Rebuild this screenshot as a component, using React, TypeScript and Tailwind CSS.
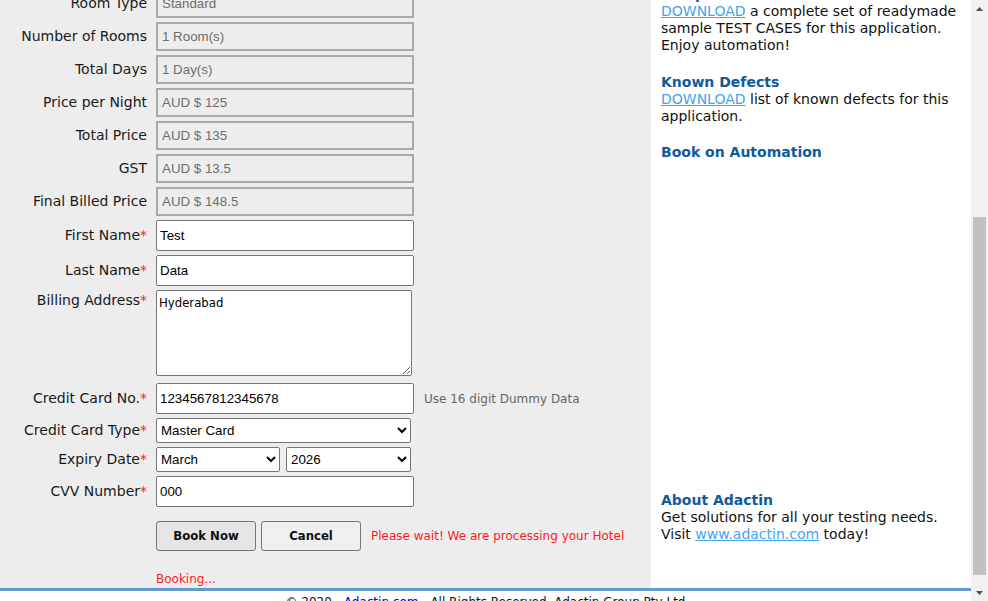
import React from 'react';

const labelCls = "w-[147px] shrink-0 text-right text-[14px] text-[#1a1a1a] font-['DejaVu_Sans',sans-serif]";
const roCls = "h-[29px] w-[258px] border-2 border-[#a9a9a9] bg-[#ededed] px-[4px] text-[13.33px] text-[#6d6d6d] font-['Liberation_Sans',Arial,sans-serif] outline-none";
const inCls = "h-[31px] w-[258px] rounded-[2px] border border-[#767676] bg-white px-[3px] text-[13.33px] text-black font-['Liberation_Sans',Arial,sans-serif] outline-none";
const selCls = "h-[25px] rounded-[2px] border border-[#767676] bg-white pl-0 text-[13.33px] text-black font-['Liberation_Sans',Arial,sans-serif] outline-none";
const btnCls = "h-[30px] w-[100px] rounded-[3px] border border-[#767676] text-[13px] font-bold text-[#111] font-['DejaVu_Sans_Condensed','DejaVu_Sans',sans-serif]";

function Req() {
    return <span className="text-[#ee2a2a]">*</span>;
}

function ReadonlyRow({ label, value }: { label: string; value: string }) {
    return (
        <div className="flex items-center gap-[9px]">
            <label className={labelCls}>{label}</label>
            <input readOnly value={value} className={roCls} />
        </div>
    );
}

function BookingForm() {
    return (
        <div className="-mt-[11px] flex flex-col gap-[4px]">
            <ReadonlyRow label="Room Type" value="Standard" />
            <ReadonlyRow label="Number of Rooms" value="1 Room(s)" />
            <ReadonlyRow label="Total Days" value="1 Day(s)" />
            <ReadonlyRow label="Price per Night" value="AUD $ 125" />
            <ReadonlyRow label="Total Price" value="AUD $ 135" />
            <ReadonlyRow label="GST" value="AUD $ 13.5" />
            <ReadonlyRow label="Final Billed Price" value="AUD $ 148.5" />

            <div className="flex items-center gap-[9px]">
                <label className={labelCls}>First Name<Req /></label>
                <input defaultValue="Test" className={inCls} />
            </div>
            <div className="flex items-center gap-[9px]">
                <label className={labelCls}>Last Name<Req /></label>
                <input defaultValue="Data" className={inCls} />
            </div>
            <div className="flex items-start gap-[9px]">
                <label className={labelCls}>Billing Address<Req /></label>
                <textarea
                    defaultValue="Hyderabad"
                    className="h-[86px] w-[256px] rounded-[2px] border border-[#767676] bg-white px-[2px] py-[2px] text-[13px] text-black font-['DejaVu_Sans_Condensed','DejaVu_Sans',sans-serif] outline-none"
                />
            </div>
            <div className="mt-[3px] flex items-center gap-[9px]">
                <label className={labelCls}>Credit Card No.<Req /></label>
                <input defaultValue="1234567812345678" className={inCls} />
                <span className="ml-[1px] text-[12px] text-[#666] font-['DejaVu_Sans',sans-serif]">Use 16 digit Dummy Data</span>
            </div>
            <div className="flex items-center gap-[9px]">
                <label className={labelCls}>Credit Card Type<Req /></label>
                <select defaultValue="MAST" className={selCls + " w-[255px]"}>
                    <option value="MAST">Master Card</option>
                    <option value="VISA">VISA</option>
                </select>
            </div>
            <div className="flex items-center gap-[9px]">
                <label className={labelCls}>Expiry Date<Req /></label>
                <div className="flex gap-[6px]">
                    <select defaultValue="3" className={selCls + " w-[124px]"}>
                        <option value="3">March</option>
                    </select>
                    <select defaultValue="2026" className={selCls + " w-[125px]"}>
                        <option value="2026">2026</option>
                    </select>
                </div>
            </div>
            <div className="flex items-center gap-[9px]">
                <label className={labelCls}>CVV Number<Req /></label>
                <input defaultValue="000" className={inCls} />
            </div>

            <div className="mt-[10px] flex items-center pl-[156px]">
                <button className={btnCls + " bg-[#e5e5e5]"}>Book Now</button>
                <button className={btnCls + " ml-[5px] bg-[#efefef]"}>Cancel</button>
                <span className="ml-[10px] text-[12px] text-[#ff1a1a] font-['DejaVu_Sans',sans-serif]">
                    Please wait! We are processing your Hotel
                </span>
            </div>
            <div className="mt-[15px] pl-[156px] text-[12px] text-[#ff1a1a] font-['DejaVu_Sans',sans-serif]">
                Booking...
            </div>
        </div>
    );
}

function SidePanel() {
    const head = "font-bold text-[#0f5a9a]";
    const link = "text-[#45a3f0] underline";
    return (
        <div className="-mt-[14px] text-[14px] leading-[17px] text-[#111] font-['DejaVu_Sans',sans-serif]">
            <div>
                <div className={head}>Sample Test Cases</div>
                <div><a className={link}>DOWNLOAD</a> a complete set of readymade sample TEST CASES for this application. Enjoy automation!</div>
            </div>
            <div className="mt-[20px]">
                <div className={head}>Known Defects</div>
                <div><a className={link}>DOWNLOAD</a> list of known defects for this application.</div>
            </div>
            <div className="mt-[19px]">
                <div className={head}>Book on Automation</div>
                <div className="h-[331px]" />
            </div>
            <div>
                <div className={head}>About Adactin</div>
                <div>Get solutions for all your testing needs.</div>
                <div>Visit <a className={link}>www.adactin.com</a> today!</div>
            </div>
        </div>
    );
}

function Scrollbar() {
    return (
        <div className="flex w-[17px] shrink-0 flex-col bg-[#f1f1f1]">
            <div className="flex h-[17px] items-center justify-center">
                <svg width="7" height="4" viewBox="0 0 7 4"><path d="M3.5 0 L7 4 L0 4 Z" fill="#505050" /></svg>
            </div>
            <div className="flex-1 px-[2px]">
                <div className="mt-[200px] h-[358px] bg-[#c1c1c1]" />
            </div>
            <div className="flex h-[17px] items-center justify-center">
                <svg width="7" height="4" viewBox="0 0 7 4"><path d="M0 0 L7 0 L3.5 4 Z" fill="#505050" /></svg>
            </div>
        </div>
    );
}

export default function App() {
    return (
        <div className="flex h-[601px] w-[988px] overflow-hidden bg-white">
            <div className="flex min-w-0 flex-1 flex-col">
                <div className="flex h-[588px] shrink-0 overflow-hidden">
                    <div className="w-[651px] shrink-0 bg-[#ededed]">
                        <BookingForm />
                    </div>
                    <div className="flex-1 bg-white pl-[10px] pr-[6px]">
                        <SidePanel />
                    </div>
                </div>
                <div className="border-t-[3px] border-[#6699cc] pt-[2px] text-center text-[12px] text-[#111] font-['DejaVu_Sans',sans-serif]">
                    © 2020 - <a className="text-[#0000cc]">Adactin.com</a> - All Rights Reserved. Adactin Group Pty Ltd
                </div>
            </div>
            <Scrollbar />
        </div>
    );
}
